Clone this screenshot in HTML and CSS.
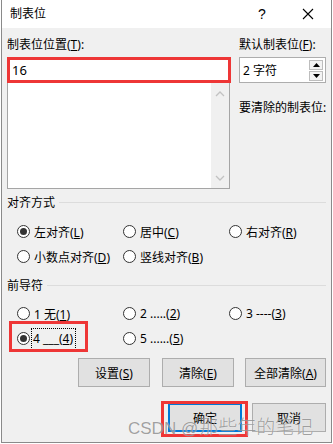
FILE: index.html
```html
<!DOCTYPE html>
<html lang="zh-CN">
<head>
<meta charset="utf-8">
<title>制表位</title>
<link rel="stylesheet" href="styles.css">
</head>
<body>
<div class="window">
  <div class="titlebar">
    <span class="title">制表位</span>
    <div class="title-controls">
      <span class="tbtn help">?</span>
      <span class="tbtn close"><svg width="12" height="12" viewBox="0 0 12 12"><path d="M1 1L11 11M11 1L1 11" stroke="#000" stroke-width="1.1" fill="none"/></svg></span>
    </div>
  </div>
  <div class="content">
    <div class="top">
      <div class="col-left">
        <div class="label">制表位位置(<u>T</u>):</div>
        <div class="input marked">16</div>
        <div class="list">
          <div class="scroll">
            <svg width="10" height="6" viewBox="0 0 10 6"><path d="M1 5L5 1L9 5" stroke="#c2c2c2" stroke-width="1.3" fill="none"/></svg>
            <svg width="10" height="6" viewBox="0 0 10 6"><path d="M1 1L5 5L9 1" stroke="#c2c2c2" stroke-width="1.3" fill="none"/></svg>
          </div>
        </div>
      </div>
      <div class="col-right">
        <div class="label">默认制表位(<u>F</u>):</div>
        <div class="spin">
          <span class="spin-text">2 字符</span>
          <div class="spin-btns">
            <span class="sb"><svg width="7" height="4" viewBox="0 0 7 4"><path d="M0 4L3.5 0L7 4Z" fill="#000"/></svg></span>
            <span class="sb"><svg width="7" height="4" viewBox="0 0 7 4"><path d="M0 0L3.5 4L7 0Z" fill="#000"/></svg></span>
          </div>
        </div>
        <div class="label clear-label">要清除的制表位:</div>
      </div>
    </div>

    <div class="group-head first"><span>对齐方式</span><i class="rule"></i></div>
    <div class="radios">
      <label class="radio"><span class="dot checked"></span><span>左对齐(<u>L</u>)</span></label>
      <label class="radio"><span class="dot"></span><span>居中(<u>C</u>)</span></label>
      <label class="radio"><span class="dot"></span><span>右对齐(<u>R</u>)</span></label>
      <label class="radio"><span class="dot"></span><span>小数点对齐(<u>D</u>)</span></label>
      <label class="radio"><span class="dot"></span><span>竖线对齐(<u>B</u>)</span></label>
    </div>

    <div class="group-head second"><span>前导符</span><i class="rule"></i></div>
    <div class="radios">
      <label class="radio"><span class="dot"></span><span>1 无(<u>1</u>)</span></label>
      <label class="radio"><span class="dot"></span><span>2 .....(<u>2</u>)</span></label>
      <label class="radio"><span class="dot"></span><span>3 ----(<u>3</u>)</span></label>
      <label class="radio focus-item"><span class="dot checked"></span><span class="focus">4 ___(<u>4</u>)</span><span class="mark-box"></span></label>
      <label class="radio"><span class="dot"></span><span>5 ......(<u>5</u>)</span></label>
    </div>

    <div class="btn-row">
      <button class="btn b1">设置(<u>S</u>)</button>
      <button class="btn b2">清除(<u>E</u>)</button>
      <button class="btn b3">全部清除(<u>A</u>)</button>
    </div>
    <div class="btn-row ok-row">
      <button class="btn ok">确定</button>
      <button class="btn cancel">取消</button>
    </div>
  </div>
  <div class="watermark"><span class="wm-latin">CSDN @</span><span class="wm-cjk">那些年的笔记</span></div>
</div>
</body>
</html>
```

FILE: styles.css
```css
* { box-sizing: border-box; }
html, body { margin: 0; padding: 0; background: #ffffff; }
body {
  font-family: "Noto Sans", "Noto Sans CJK SC", sans-serif;
  font-size: 12px;
  color: #000;
}
u { text-decoration: underline; text-underline-offset: 1px; }

.window {
  position: relative;
  margin-left: 1px;
  width: 331px;
  height: 443px;
  border: 1px solid #8a8a8a;
  border-top: none;
  background: #f0f0f0;
  overflow: hidden;
}

.titlebar {
  height: 28px;
  background: #ffffff;
  display: flex;
  align-items: center;
  justify-content: space-between;
  padding-left: 8px;
}
.title { font-size: 12px; line-height: 16px; }
.title-controls { display: flex; height: 28px; }
.tbtn {
  width: 46px;
  height: 28px;
  display: flex;
  align-items: center;
  justify-content: center;
}
.help { font-family: "Liberation Sans", sans-serif; font-size: 14px; }

.content { padding: 9px 5px 0 5px; }

.top {
  display: grid;
  grid-template-columns: 224px 87px;
  column-gap: 8px;
}
.label { line-height: 16px; margin-bottom: 4px; white-space: nowrap; }
.input {
  height: 26px;
  background: #fff;
  padding-left: 2px;
  line-height: 20px;
  font-size: 13px;
}
.marked { border: 3px solid #ee3636; position: relative; z-index: 2; }
.list {
  width: 223px;
  height: 107px;
  margin-top: -1px;
  border: 1px solid #a5a5a5;
  background: #fff;
  display: flex;
  justify-content: flex-end;
}
.scroll {
  width: 18px;
  background: #f0f0f0;
  display: flex;
  flex-direction: column;
  justify-content: space-between;
  align-items: center;
  padding: 8px 0 7px;
}

.spin {
  height: 26px;
  border: 1px solid #adadad;
  background: #fff;
  display: flex;
  align-items: center;
  justify-content: space-between;
  padding: 0 2px 0 3px;
}
.spin-text { font-size: 12px; }
.spin-btns { display: flex; flex-direction: column; gap: 1px; }
.sb {
  width: 14px;
  height: 10px;
  border: 1px solid #bdbdbd;
  background: #f3f3f3;
  display: flex;
  align-items: center;
  justify-content: center;
}
.clear-label { margin-top: 17px; }

.group-head {
  display: flex;
  align-items: center;
  line-height: 16px;
}
.group-head.first { margin-top: 6px; }
.group-head.second { margin-top: 9px; }
.rule { flex: 1; height: 1px; background: #dcdcdc; margin-left: 4px; margin-top: -2px; }

.radios {
  display: grid;
  grid-template-columns: 106px 106px 1fr;
  grid-auto-rows: 25px;
  padding-left: 10px;
  margin-top: 8px;
}
.group-head.second + .radios { margin-top: 7px; }
.radio {
  display: flex;
  align-items: center;
  gap: 4px;
  white-space: nowrap;
  position: relative;
}
.dot {
  width: 13px;
  height: 13px;
  border: 1px solid #333;
  border-radius: 50%;
  background: #fff;
  display: flex;
  align-items: center;
  justify-content: center;
  flex: none;
}
.dot.checked::after {
  content: "";
  width: 7px;
  height: 7px;
  border-radius: 50%;
  background: #333;
}
.focus {
  outline: 1px dotted #000;
  outline-offset: 0;
  padding: 1px 2px 1px 1px;
  margin-left: -2px;
  line-height: 18px;
}
.mark-box {
  position: absolute;
  left: -8px;
  top: -5px;
  width: 79px;
  height: 31px;
  border: 3px solid #ee3636;
}

.btn-row {
  display: flex;
  justify-content: flex-end;
  margin-top: 7px;
}
.btn {
  font-family: inherit;
  font-size: 12px;
  color: #000;
  height: 29px;
  background: #e1e1e1;
  border: 1px solid #adadad;
  padding: 0;
  margin: 0;
}
.b1, .b2 { width: 72px; }
.b2 { margin-left: 12px; }
.b3 { width: 81px; margin-left: 11px; }

.ok-row { margin-top: 16px; }
.ok {
  width: 74px;
  border: 2px solid #0078d7;
  position: relative;
  margin-right: 10px;
}
.ok::before {
  content: "";
  position: absolute;
  left: -9px;
  right: -8px;
  top: -4px;
  bottom: -7px;
  border: 3px solid #ee3636;
}
.cancel { width: 74px; }

.watermark {
  position: absolute;
  left: 126px;
  top: 412px;
  display: flex;
  align-items: baseline;
  color: rgba(100, 100, 100, 0.6);
  text-shadow: 0 0 1px rgba(255,255,255,0.8);
  white-space: nowrap;
  pointer-events: none;
}
.wm-latin { font-family: "Liberation Sans", sans-serif; font-size: 17px; margin-right: 1px; }
.wm-cjk { font-family: "Noto Sans CJK SC", sans-serif; font-size: 19px; letter-spacing: 0; font-weight: 300; }
```
